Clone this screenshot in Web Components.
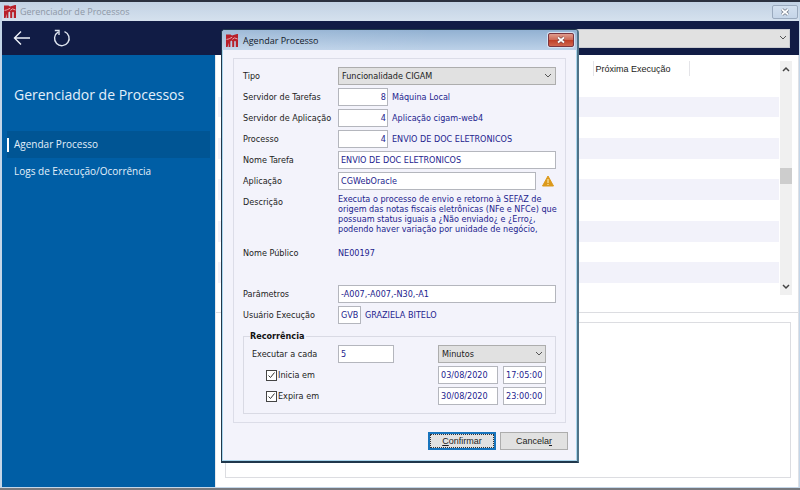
<!DOCTYPE html>
<html lang="pt-BR">
<head>
<meta charset="utf-8">
<title>Gerenciador de Processos</title>
<style>
html,body{margin:0;height:100%}
body{font-family:"DejaVu Sans Condensed","DejaVu Sans",sans-serif;font-size:9px;color:#1c1c22;background:#fff}
</style>
</head>
<body>
<app-window heading="Gerenciador de Processos">
  <tool-bar slot="toolbar"></tool-bar>
  <side-nav slot="nav" heading="Gerenciador de Processos"></side-nav>
  <process-list></process-list>
  <process-dialog slot="dialog" heading="Agendar Processo"></process-dialog>
</app-window>

<script>
const define = (name, render) => customElements.define(name, class extends HTMLElement {
  connectedCallback() {
    if (this.shadowRoot) return;
    const t = document.createElement('template');
    t.innerHTML = render(this);
    this.attachShadow({ mode: 'open', delegatesFocus: true }).append(t.content.cloneNode(true));
  }
});
const attr = (el, n, d = '') => el.getAttribute(n) ?? d;

define('app-logo', () => `
<style>:host{display:block;width:12px;height:13px}svg{display:block}</style>
<svg width="12" height="13" viewBox="0 0 12 13" aria-hidden="true">
  <path d="M0 .5h4.500l1.500 1L11 0h1v13H9.800V7.500L9 6.800l-.8.7V13H6.200V7.300L5.200 6.600l-.8.8V13H2.600V8.800L1.600 13H0z" fill="#b8202a"/>
  <path d="M.5 5.400C3 5.200 4.500 4 6.200 3.200M6.300 5.400l2.200-1.500L11.600 5" fill="none" stroke="#f3c9cf" stroke-width=".8"/>
</svg>`);

define('close-button', () => `
<style>
:host{display:block}
button{display:grid;place-items:center;width:26px;height:14px;margin:0;padding:0;border:1px solid #9aaabe;border-radius:2px;background:linear-gradient(#d3e0ef,#c5d5e8)}
path{stroke:#6b7482}
.inner{stroke:#fff}
:host([active]) button{border-color:#7c3540;background:linear-gradient(#df9c8e,#cd6a56 48%,#bf3d25 50%,#d0664e);box-shadow:0 0 0 1px #d5e3f1}
:host([active]) path{stroke:#7b4a4a}
:host([active]) .inner{stroke:#fff}
svg{display:block}
</style>
<button type="button" aria-label="Fechar"><svg width="10" height="8" viewBox="0 0 10 8" fill="none">
<path d="M2 1.500 8 6.500M8 1.500 2 6.500" stroke-width="3.200"/><path class="inner" d="M2 1.500 8 6.500M8 1.500 2 6.500" stroke-width="1.700"/></svg></button>`);

define('app-window', el => `
<style>
:host{display:grid;box-sizing:border-box;min-height:100vh;grid-template-rows:19px 34px 1fr;border:solid #2b3140;border-width:2px 0 0;border-bottom:2px solid #77797e;position:relative;padding:0 1px 1px 2px;background:#c4d6e8}
header{display:flex;align-items:center;gap:4px;padding:0 1px 0 2px;background:linear-gradient(#c2d2e4,#d5e1ee);font-family:"Open Sans",sans-serif;color:#8e98a6}
h1{flex:1;margin:0;font-size:9px;font-weight:400}
.body{display:grid;grid-template-columns:213px 1fr;background:#fff}
</style>
<header><app-logo></app-logo><h1>${attr(el,'heading')}</h1><close-button></close-button></header>
<slot name="toolbar"></slot>
<div class="body"><slot name="nav"></slot><slot></slot></div>
<slot name="dialog"></slot>`);

define('tool-bar', () => `
<style>
:host{display:flex;align-items:center;gap:22px;padding:0 9px 0 11px;background:#111c45}
button{display:block;margin:0;padding:0;border:0;background:none}
svg{display:block}
drop-down{flex:1;margin-left:146px;--h:19px;--border:#c9cbd0;--bg:#e1e1e1}
</style>
<button type="button" aria-label="Voltar"><svg width="18" height="18" viewBox="0 0 18 18" fill="none" stroke="#eef2fa" stroke-width="1.400"><path d="M17 9H1.500M8 2.500 1.500 9 8 15.500"/></svg></button>
<button type="button" aria-label="Atualizar"><svg width="18" height="18" viewBox="0 0 18 18" fill="none" stroke="#dfe5f0" stroke-width="1.400"><path d="M11.500 2.600A7.300 7.300 0 1 1 5 3.200M1.800 1.500H6V6"/></svg></button>
<drop-down name="Filtro"></drop-down>`);

define('drop-down', el => `
<style>
:host{display:block;position:relative}
select{display:block;box-sizing:border-box;width:100%;height:var(--h,18px);margin:0;padding:0 16px 0 3px;border:1px solid var(--border,#adadad);border-radius:0;background:var(--bg,#e1e1e1);color:#1c1c22;font:inherit;appearance:none}
svg{position:absolute;right:3px;top:50%;margin-top:-3px;pointer-events:none}
</style>
<select aria-label="${attr(el,'name')}"><option>${attr(el,'value')}</option></select>
<svg width="8" height="6" viewBox="0 0 8 6" fill="none" stroke="#555"><path d="M1 1l3 3 3-3"/></svg>`);

define('side-nav', el => `
<style>
:host{display:block;padding:30px 5px 0;background:#005ea5;color:#e3f0fb;font-family:"Open Sans",sans-serif}
h2{margin:0 0 26px;padding-left:7px;font-size:14px;line-height:20px;font-weight:400}
a{display:block;padding-left:7px;font-size:10px;line-height:27px;color:inherit;text-decoration:none}
a[aria-current]{background:linear-gradient(#fff,#fff) 0 50%/2px 14px no-repeat #005594}
</style>
<h2>${attr(el,'heading')}</h2>
<nav><a href="#agendar" aria-current="page">Agendar Processo</a><a href="#logs">Logs de Execução/Ocorrência</a></nav>`);

define('process-list', () => `
<style>
:host{display:grid;grid-template-rows:auto 1fr;min-width:0;border-right:1px solid #dfe1e6;border-left:1px solid #e6e8ec}
.top{display:flex;padding:6px 6px 17px 2px;border-bottom:1px solid #dcdde1}
table{flex:1;height:222px;margin-bottom:12px;border-collapse:collapse;table-layout:fixed;width:100%}
td,th{padding:0}
th{height:15px;font:400 9px "Liberation Sans",Arial,sans-serif;text-align:left;padding-left:2px;border-right:1px solid #e4e4e8}
th:last-child{border:0}
tbody tr:nth-child(even){background:#f2f2fa}
.bar{display:flex;flex-direction:column;align-items:center;width:12px;margin-left:1px;background:#f0f0f0}
.bar i{width:12px;height:16px;background:#cdcdcd;margin:91px 0 auto}
.bar svg{display:block;margin:5px 0}
.detail{margin:9px 7px 9px 9px;border:1px solid #dcdde1}
</style>
<div class="top">
<table><colgroup><col><col style="width:96px"><col style="width:90px"></colgroup>
<thead><tr><th></th><th scope="col">Próxima Execução</th><th></th></tr></thead>
<tbody>${'<tr><td></td><td></td><td></td></tr>'.repeat(10)}</tbody></table>
<div class="bar"><svg width="8" height="6" viewBox="0 0 8 6" fill="none" stroke="#444" stroke-width="1.500"><path d="M1 5l3-3 3 3"/></svg><i></i><svg width="8" height="6" viewBox="0 0 8 6" fill="none" stroke="#444" stroke-width="1.500"><path d="M1 1l3 3 3-3"/></svg></div>
</div>
<div class="detail"></div>`);

/* One labelled line of the form: caption, control, optional remark. */
define('form-row', el => {
  const size = attr(el,'size','fill'), note = attr(el,'note');
  const control = el.hasAttribute('options')
    ? `<select id="c"><option>${attr(el,'options')}</option></select>`
    : el.hasAttribute('text') ? `<output id="c">${attr(el,'text')}</output>`
    : `<input id="c" class="${size}" value="${attr(el,'value')}">`;
  return `
<style>
:host{display:grid;grid-template-columns:95px 1fr;min-height:18px}
label{line-height:18px}
.line{display:flex;align-items:center;gap:4px;min-width:0;color:#23238e}
input,select{box-sizing:border-box;width:100%;height:18px;margin:0;padding:0 2px;border:1px solid #b4b6bd;border-radius:0;background:#fff;color:#23238e;font:inherit;appearance:none}
.code{width:50px;text-align:right;padding-right:1px}
.tag{width:23px}
select{color:#1c1c22;padding-left:3px;border-color:#adadad;background:url("data:image/svg+xml,%3Csvg xmlns='http://www.w3.org/2000/svg' width='8' height='6' fill='none' stroke='%23555'%3E%3Cpath d='M1 1l3 3 3-3'/%3E%3C/svg%3E") right 3px center no-repeat #e1e1e1}
output{display:block;white-space:pre;line-height:10px;padding-top:4px;align-self:start}
:host(.desc) output{padding-top:1px}
span{white-space:nowrap}
</style>
<label for="c">${attr(el,'label')}</label><div class="line">${control}${note ? `<span>${note}</span>` : ''}<slot></slot></div>`;
});

define('warning-icon', () => `
<style>:host{display:block;flex:none;margin:0 2px}svg{display:block}</style>
<svg width="12" height="12" viewBox="0 0 12 12" role="img" aria-label="Aviso"><path d="M6 1 11.500 11H.5z" fill="#dc9a1c" stroke="#dc9a1c" stroke-linejoin="round"/><path d="M6 4v4M6 9v1" stroke="#fff3c4" stroke-width="1"/></svg>`);

define('recurrence-group', () => `
<style>
:host{display:block}
fieldset{min-width:0;margin:0;padding:0 9px 8px 8px;border:1px solid #d9dae4}
legend{padding:0 2px 0 0;margin-left:-2px;font-size:9px;font-weight:700;line-height:17px;color:#111}
.grid{display:grid;grid-template-columns:86px 56px 1fr 60px 43px;column-gap:0;row-gap:3px;align-items:center}
.grid>*{min-width:0}
input:not([type]){box-sizing:border-box;width:100%;height:18px;margin:0;padding:0 2px;border:1px solid #b4b6bd;border-radius:0;background:#fff;color:#23238e;font:inherit}
.sel{grid-column:4/6;margin-left:-5px}
.check{grid-column:1/4;display:flex;align-items:center;gap:1px;padding-left:14px}
.check input{appearance:none;width:11px;height:11px;margin:0;border:1px solid #444;background:url("data:image/svg+xml,%3Csvg xmlns='http://www.w3.org/2000/svg' width='9' height='9' fill='none' stroke='%23333'%3E%3Cpath d='M1.500 4.500l2 2 4-5'/%3E%3C/svg%3E") center no-repeat #fff}
.date{margin:0 5px 0 -5px}
</style>
<fieldset><legend>Recorrência</legend>
<div class="grid">
<label for="n">Executar a cada</label><input id="n" value="5"><drop-down class="sel" name="Unidade" value="Minutos"></drop-down>
<div class="check"><input type="checkbox" id="a" checked><label for="a">Inicia em</label></div><div class="date"><input aria-label="Data de início" value="03/08/2020"></div><input aria-label="Hora de início" value="17:05:00">
<div class="check"><input type="checkbox" id="b" checked><label for="b">Expira em</label></div><div class="date"><input aria-label="Data de expiração" value="30/08/2020"></div><input aria-label="Hora de expiração" value="23:00:00">
</div></fieldset>`);

define('push-button', () => `
<style>
:host{display:block}
button{display:block;box-sizing:border-box;width:68px;height:18px;margin:0;padding:0;border:1px solid #adadad;border-radius:0;background:#e1e1e1;color:#1c1c22;font:9px "Liberation Sans",Arial,sans-serif}
:host([primary]) button{border:2px solid #1874bd;outline:1px dotted #333;outline-offset:-3px}
</style>
<button type="button"><slot></slot></button>`);

define('process-dialog', el => `
<style>
:host{position:absolute;left:221px;top:27px;width:358px;box-sizing:border-box;border:1px solid #20384c;border-right:2px solid #4f7388;border-bottom-width:2px;border-radius:4px 4px 0 0;background:#f3f3fb;box-shadow:inset 0 0 0 1px #a9d5ec;overflow:hidden}
header{display:flex;align-items:center;gap:5px;height:20px;padding:0 3px 0 4px;background:linear-gradient(90deg,#fff2,#fff0 60%),linear-gradient(#92b1d2,#bcd1e8);font-family:"Open Sans",sans-serif;color:#131a2a}
h2{flex:1;margin:0;font-size:9px;font-weight:400}
.frame{margin:8px 11px 9px;padding:8px 9px;border:1px solid #dcdde8;display:grid;grid-template-columns:1fr;gap:3px}
.gap{margin-top:20px}
.desc{height:48px}
recurrence-group{margin-top:1px}
footer{display:flex;justify-content:flex-end;gap:4px;padding:0 9px 11px}
u{text-underline-offset:1px}
</style>
<header><app-logo></app-logo><h2>${attr(el,'heading')}</h2><close-button active></close-button></header>
<form class="frame">
<form-row label="Tipo" options="Funcionalidade CIGAM"></form-row>
<form-row label="Servidor de Tarefas" size="code" value="8" note="Máquina Local"></form-row>
<form-row label="Servidor de Aplicação" size="code" value="4" note="Aplicação cigam-web4"></form-row>
<form-row label="Processo" size="code" value="4" note="ENVIO DE DOC ELETRONICOS"></form-row>
<form-row label="Nome Tarefa" value="ENVIO DE DOC ELETRONICOS"></form-row>
<form-row label="Aplicação" value="CGWebOracle"><warning-icon></warning-icon></form-row>
<form-row class="desc" label="Descrição" text="Executa o processo de envio e retorno à SEFAZ de
origem das notas fiscais eletrônicas (NFe e NFCe) que
possuam status iguais a ¿Não enviado¿ e ¿Erro¿,
podendo haver variação por unidade de negócio,"></form-row>
<form-row label="Nome Público" text="NE00197"></form-row>
<form-row class="gap" label="Parâmetros" value="-A007,-A007,-N30,-A1"></form-row>
<form-row label="Usuário Execução" size="tag" value="GVB" note="GRAZIELA BITELO"></form-row>
<recurrence-group></recurrence-group>
</form>
<footer><push-button primary><u>C</u>onfirmar</push-button><push-button>Cancela<u>r</u></push-button></footer>`);
</script>
</body>
</html>
